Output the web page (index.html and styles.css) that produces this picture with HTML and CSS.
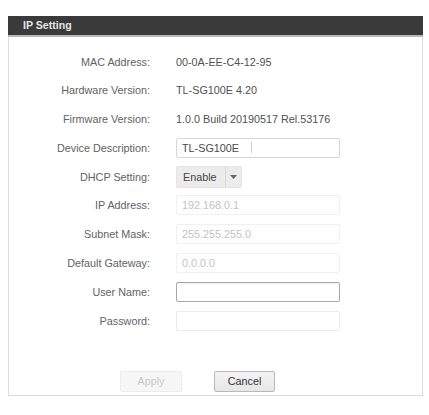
FILE: index.html
```html
<!DOCTYPE html>
<html>
<head>
<meta charset="utf-8">
<link rel="stylesheet" href="styles.css">
</head>
<body>
<div class="panel">
  <div class="panel-head">IP Setting</div>
  <div class="form">
    <div class="lbl">MAC Address:</div><div class="val">00-0A-EE-C4-12-95</div>
    <div class="lbl">Hardware Version:</div><div class="val">TL-SG100E 4.20</div>
    <div class="lbl">Firmware Version:</div><div class="val">1.0.0 Build 20190517 Rel.53176</div>
    <div class="lbl">Device Description:</div><div class="input normal">TL-SG100E<span class="caret"></span></div>
    <div class="lbl">DHCP Setting:</div>
    <div class="select"><span class="sel-text">Enable</span><span class="sel-arrow"><svg width="7" height="4" viewBox="0 0 7 4"><path d="M0 0H7L3.5 4Z" fill="#666"/></svg></span></div>
    <div class="lbl">IP Address:</div><div class="input disabled">192.168.0.1</div>
    <div class="lbl">Subnet Mask:</div><div class="input disabled">255.255.255.0</div>
    <div class="lbl">Default Gateway:</div><div class="input disabled">0.0.0.0</div>
    <div class="lbl">User Name:</div><div class="input focused"></div>
    <div class="lbl">Password:</div><div class="input faint"></div>
  </div>
  <div class="buttons">
    <div class="btn btn-disabled">Apply</div>
    <div class="btn">Cancel</div>
  </div>
</div>
</body>
</html>
```

FILE: styles.css
```css
html, body {
  margin: 0;
  padding: 0;
  background: #ffffff;
}
body {
  font-family: "Liberation Sans", Arial, sans-serif;
  font-size: 10.8px;
  color: #555;
}
.panel {
  margin: 16px 0 0 8px;
  width: 415px;
  box-sizing: border-box;
  border: 1px solid #dcdcdc;
  border-top: none;
}
.panel-head {
  height: 19px;
  background: #3a3a3a;
  border-bottom: 2px solid #b8b8b8;
  color: #e4e4e4;
  font-weight: bold;
  font-size: 10.6px;
  line-height: 19px;
  padding-left: 15px;
  margin: 0 -1px;
}
.form {
  display: grid;
  grid-template-columns: 141px 164px;
  grid-auto-rows: 21px;
  column-gap: 26px;
  row-gap: 7.8px;
  align-items: center;
  padding-top: 14px;
}
.lbl {
  text-align: right;
  color: #626262;
  white-space: nowrap;
}
.val {
  color: #505050;
  white-space: nowrap;
}
.input {
  height: 20px;
  box-sizing: border-box;
  border: 1px solid #d6d6d6;
  border-radius: 2px;
  padding-left: 5px;
  line-height: 18px;
  color: #4a4a4a;
  display: flex;
  align-items: center;
}
.input.disabled {
  border-color: #f0f0f0;
  background: #fefefe;
  color: #c4c4c4;
}
.input.focused {
  border-color: #a8a8a8;
  box-shadow: inset 0 1px 1px rgba(0,0,0,0.06);
}
.input.faint {
  border-color: #ececec;
}
.caret {
  display: inline-block;
  width: 1px;
  height: 11px;
  background: #cfcfcf;
  margin-left: 12px;
}
.select {
  width: 66px;
  height: 22px;
  box-sizing: border-box;
  background: #ececec;
  border: 1px solid #e4e4e4;
  border-radius: 2px;
  display: flex;
  align-items: stretch;
}
.sel-text {
  width: 49px;
  box-sizing: border-box;
  padding-left: 6px;
  line-height: 20px;
  color: #444;
  border-right: 1px solid #d8d8d8;
}
.sel-arrow {
  flex: 1;
  display: flex;
  align-items: center;
  justify-content: center;
}
.buttons {
  display: flex;
  gap: 32px;
  padding: 40px 0 3px 111px;
}
.btn {
  width: 61px;
  height: 21px;
  box-sizing: border-box;
  border: 1px solid #b9b9b9;
  border-radius: 2px;
  background: linear-gradient(#f4f4f4, #e6e6e6);
  color: #333;
  text-align: center;
  line-height: 19px;
}
.btn-disabled {
  width: 62px;
  border-color: #ececec;
  background: #f6f6f6;
  color: #c8c8c8;
}
```
